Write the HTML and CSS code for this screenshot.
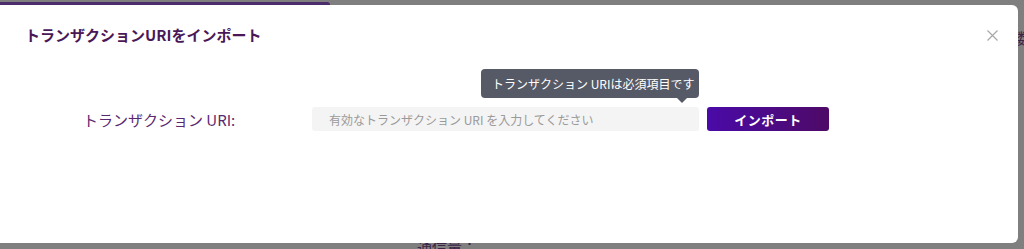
FILE: index.html
```html
<!DOCTYPE html>
<html lang="ja">
<head>
<meta charset="utf-8">
<link rel="stylesheet" href="styles.css">
</head>
<body>
<div class="page">
  <div class="backdrop">
    <div class="bg-tab"></div>
    <div class="bg-side">数</div>
    <div class="bg-bottom">通信量：</div>
  </div>
  <div class="modal">
    <div class="modal-header">
      <h2 class="modal-title">トランザクションURIをインポート</h2>
      <button class="close" aria-label="close">
        <svg width="11" height="11" viewBox="0 0 11 11"><path d="M0.5 0.5 L10.5 10.5 M10.5 0.5 L0.5 10.5" stroke="#a8a8a8" stroke-width="1.2" fill="none"/></svg>
      </button>
    </div>
    <div class="form-row">
      <label class="field-label">トランザクション URI:</label>
      <div class="input-wrap">
        <input class="field-input" type="text" placeholder="有効なトランザクション URI を入力してください">
        <div class="tooltip">トランザクション URIは必須項目です</div>
      </div>
      <button class="btn-import">インポート</button>
    </div>
  </div>
</div>
</body>
</html>
```
FILE: styles.css
```css
* { box-sizing: border-box; }
html, body { margin: 0; padding: 0; }
body {
  font-family: "Noto Sans CJK JP", "Noto Sans", sans-serif;
  background: #7f7f7f;
}
.page {
  position: relative;
  width: 1024px;
  height: 249px;
  overflow: hidden;
  background: #7f7f7f;
}
.backdrop { position: absolute; inset: 0; }
.bg-tab {
  position: absolute;
  top: 2px; left: 0;
  width: 330px; height: 4px;
  background: #4a2d6a;
  border-radius: 0 3px 0 0;
}
.bg-side {
  position: absolute;
  top: 27px; left: 1017px;
  font-size: 15px;
  color: #3c2446;
}
.bg-bottom {
  position: absolute;
  top: 236px; left: 417px;
  font-size: 15px;
  color: #3c2446;
}
.modal {
  position: absolute;
  top: 5px; left: 0; right: 6px; bottom: 6px;
  background: #fff;
  border-radius: 0 6px 6px 0;
}
.modal-header {
  display: flex;
  align-items: center;
  justify-content: space-between;
  padding: 19px 20px 0 25px;
}
.modal-title {
  margin: 0;
  font-size: 15px;
  line-height: 22px;
  font-weight: 700;
  color: #4a1857;
}
.close {
  border: none;
  background: none;
  padding: 0;
  display: flex;
}
.form-row {
  display: flex;
  align-items: center;
  margin-top: 61px;
  padding-left: 83px;
}
.field-label {
  width: 229px;
  font-size: 15px;
  color: #5a2870;
}
.input-wrap {
  position: relative;
  width: 387px;
}
.field-input {
  display: block;
  width: 100%;
  height: 24px;
  border: none;
  border-radius: 3px;
  background: #f4f4f4;
  padding: 0 0 0 17px;
  font-family: inherit;
  font-size: 12px;
  outline: none;
}
.field-input::placeholder { color: #9a9a9a; }
.tooltip {
  position: absolute;
  right: 0;
  bottom: 33px;
  height: 29px;
  width: 218px;
  padding: 0 11px;
  background: #565a66;
  color: #fff;
  font-size: 12px;
  line-height: 29px;
  border-radius: 4px;
  white-space: nowrap;
}
.tooltip::after {
  content: "";
  position: absolute;
  right: 12px;
  bottom: -5px;
  border-left: 5px solid transparent;
  border-right: 5px solid transparent;
  border-top: 5px solid #565a66;
}
.btn-import {
  margin-left: 8px;
  width: 122px;
  height: 24px;
  border: none;
  border-radius: 3px;
  background: linear-gradient(90deg, #4a0aa8, #4e0a66);
  color: #fff;
  font-family: inherit;
  font-size: 13px;
  font-weight: 700;
  letter-spacing: 0.5px;
  padding: 0;
}
```
